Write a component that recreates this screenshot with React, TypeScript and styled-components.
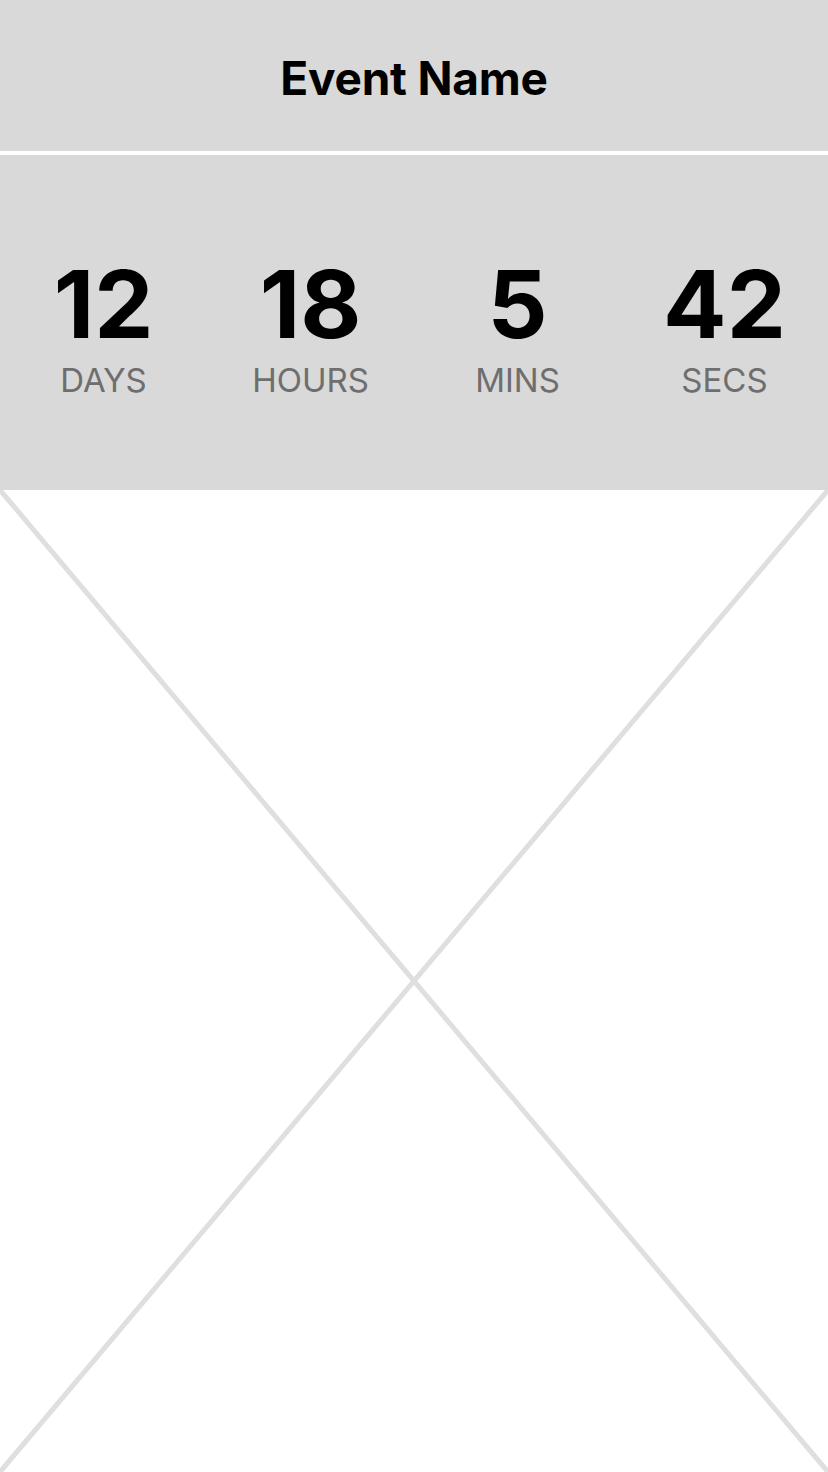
import React from "react";
import styled, { createGlobalStyle } from "styled-components";

const Global = createGlobalStyle`
  html, body { margin: 0; padding: 0; background: #ffffff; }
  body { font-family: Inter, "Noto Sans", sans-serif; }
  * { box-sizing: border-box; }
`;

const Page = styled.div`
  width: 828px;
  height: 1472px;
  display: flex;
  flex-direction: column;
  background: #ffffff;
  overflow: hidden;
`;

const Header = styled.header`
  height: 151px;
  flex: none;
  background: #d9d9d9;
  display: flex;
  align-items: center;
  justify-content: center;
  padding-top: 4px;
`;

const Title = styled.h1`
  margin: 0;
  font-family: Inter, sans-serif;
  font-weight: 700;
  font-size: 46px;
  color: #000000;
  letter-spacing: -0.2px;
`;

const Countdown = styled.section`
  margin-top: 4px;
  height: 335px;
  flex: none;
  background: #d9d9d9;
  display: grid;
  grid-template-columns: repeat(4, 1fr);
  align-items: center;
  padding-top: 8px;
`;

const Unit = styled.div`
  display: flex;
  flex-direction: column;
  align-items: center;
`;

const Value = styled.div`
  font-family: Inter, sans-serif;
  font-weight: 700;
  font-size: 94px;
  line-height: 1;
  color: #000000;
`;

const Label = styled.div`
  margin-top: 13px;
  font-family: Inter, sans-serif;
  font-weight: 400;
  font-size: 33px;
  line-height: 1;
  color: #6e6e6e;
  text-transform: uppercase;
`;

const Placeholder = styled.div`
  flex: 1;
  position: relative;
`;

const Cross = styled.svg`
  display: block;
  width: 100%;
  height: 100%;
`;

const units = [
  { value: 12, label: "Days" },
  { value: 18, label: "Hours" },
  { value: 5, label: "Mins" },
  { value: 42, label: "Secs" },
];

export default function App() {
  return (
    <Page>
      <Global />
      <Header>
        <Title>Event Name</Title>
      </Header>
      <Countdown>
        {units.map((u) => (
          <Unit key={u.label}>
            <Value>{u.value}</Value>
            <Label>{u.label}</Label>
          </Unit>
        ))}
      </Countdown>
      <Placeholder>
        <Cross viewBox="0 0 828 982" preserveAspectRatio="none">
          <line x1="0" y1="0" x2="828" y2="982" stroke="#dfdfdf" strokeWidth="5" />
          <line x1="828" y1="0" x2="0" y2="982" stroke="#dfdfdf" strokeWidth="5" />
        </Cross>
      </Placeholder>
    </Page>
  );
}
